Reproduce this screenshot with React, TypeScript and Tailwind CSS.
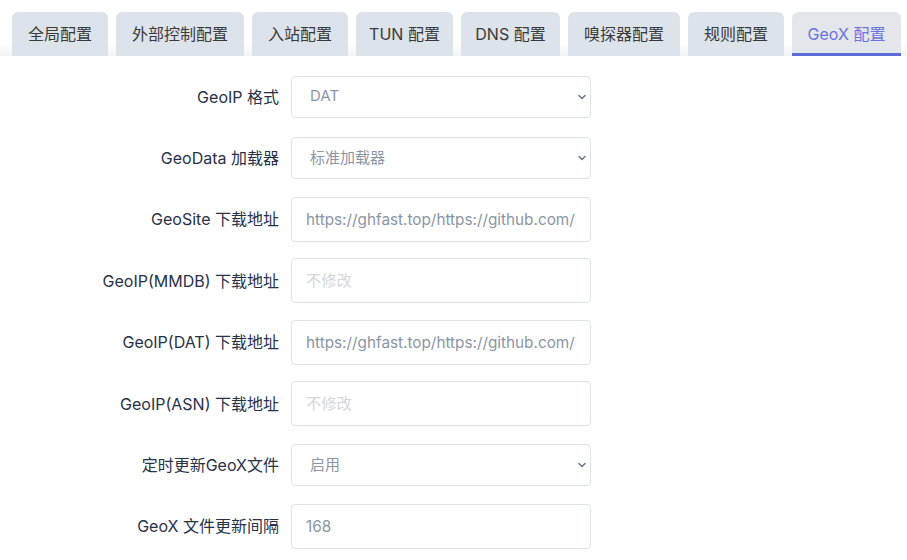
import { ChevronDown } from "lucide-react";

const tabs = [
  { label: "全局配置", w: "w-[96px]" },
  { label: "外部控制配置", w: "w-[128px]" },
  { label: "入站配置", w: "w-[96px]" },
  { label: "TUN 配置", w: "w-[97px]" },
  { label: "DNS 配置", w: "w-[99px]" },
  { label: "嗅探器配置", w: "w-[112px]" },
  { label: "规则配置", w: "w-[96px]" },
  { label: "GeoX 配置", w: "w-[109px]" },
];

type Row = {
  label: string;
  kind: "select" | "input";
  value?: string;
  placeholder?: string;
};

const rows: Row[] = [
  { label: "GeoIP 格式", kind: "select", value: "DAT" },
  { label: "GeoData 加载器", kind: "select", value: "标准加载器" },
  { label: "GeoSite 下载地址", kind: "input", value: "https://ghfast.top/https://github.com/MetaCubeX/meta-rules-dat/releases/download/latest/geosite.dat" },
  { label: "GeoIP(MMDB) 下载地址", kind: "input", placeholder: "不修改" },
  { label: "GeoIP(DAT) 下载地址", kind: "input", value: "https://ghfast.top/https://github.com/MetaCubeX/meta-rules-dat/releases/download/latest/geoip.dat" },
  { label: "GeoIP(ASN) 下载地址", kind: "input", placeholder: "不修改" },
  { label: "定时更新GeoX文件", kind: "select", value: "启用" },
  { label: "GeoX 文件更新间隔", kind: "input", value: "168" },
];

export default function App() {
  const active = tabs.length - 1;

  return (
    <div className="w-[907px] h-[560px] bg-white overflow-hidden font-['Inter','Noto_Sans_CJK_SC',sans-serif]">
      {/* tab bar */}
      <div className="flex gap-2 px-3 pt-3 h-14 bg-[linear-gradient(to_bottom,#ffffff_76%,#f1f3f5_100%)]">
        {tabs.map((t, i) => (
          <div
            key={t.label}
            className={
              (i === active
                ? "bg-[#e3e7ec] text-[#6a74df] border-b-[3px] border-[#5c6bd8] pt-[3px] "
                : "bg-[#dde3ea] text-[#3a3a3a] ") +
              t.w +
              " shrink-0 whitespace-nowrap h-11 flex items-center justify-center rounded-t-md text-base"
            }
          >
            {t.label}
          </div>
        ))}
      </div>

      {/* form */}
      <div className="flex flex-col pt-[10px]">
        {rows.map((r) => (
          <div key={r.label} className="flex items-center h-[61.4px]">
            <label className="w-[279px] text-right text-base text-[#283247]">
              {r.label}
            </label>
            <div className="ml-3 w-[300px] relative">
              {r.kind === "select" ? (
                <>
                  <select
                    defaultValue={r.value}
                    className="w-full h-[42px] appearance-none rounded border border-[#dfe2e6] bg-white pl-[18px] pr-8 text-[15px] text-[#8a96a5] outline-none"
                  >
                    <option>{r.value}</option>
                  </select>
                  <ChevronDown
                    className="absolute right-[3px] top-1/2 -translate-y-1/2 w-[12px] h-[12px] text-[#6d7683] pointer-events-none"
                    strokeWidth={3}
                  />
                </>
              ) : (
                <input
                  readOnly
                  defaultValue={r.value}
                  placeholder={r.placeholder}
                  className="w-full h-[45px] rounded border border-[#dfe2e6] bg-white pl-[14px] pr-[14px] text-[15.3px] text-[#8a96a5] placeholder:text-[#d3d6db] outline-none"
                />
              )}
            </div>
          </div>
        ))}
      </div>
    </div>
  );
}
